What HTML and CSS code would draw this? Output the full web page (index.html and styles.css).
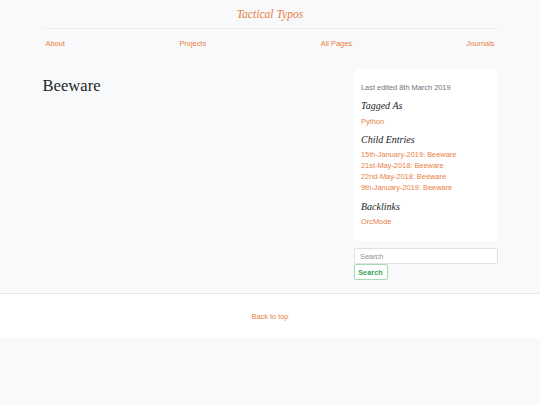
FILE: index.html
```html
<!DOCTYPE html>
<html lang="en">
<head>
<meta charset="utf-8">
<title>Beeware - Tactical Typos</title>
<link rel="stylesheet" href="styles.css">
</head>
<body>
<div class="container">
  <header class="site-header">
    <a class="site-title" href="#">Tactical Typos</a>
  </header>
  <nav class="site-nav">
    <a href="#">About</a>
    <a href="#">Projects</a>
    <a href="#">All Pages</a>
    <a href="#">Journals</a>
  </nav>
  <main class="layout">
    <article class="content">
      <h1 class="page-title">Beeware</h1>
    </article>
    <aside class="sidebar">
      <div class="card">
        <p class="edited">Last edited 8th March 2019</p>
        <h4 class="side-heading">Tagged As</h4>
        <ul class="links">
          <li><a href="#">Python</a></li>
        </ul>
        <h4 class="side-heading">Child Entries</h4>
        <ul class="links">
          <li><a href="#">15th-January-2019: Beeware</a></li>
          <li><a href="#">21st-May-2018: Beeware</a></li>
          <li><a href="#">22nd-May-2018: Beeware</a></li>
          <li><a href="#">9th-January-2019: Beeware</a></li>
        </ul>
        <h4 class="side-heading">Backlinks</h4>
        <ul class="links">
          <li><a href="#">OrcMode</a></li>
        </ul>
      </div>
      <form class="search">
        <input class="search-input" type="text" placeholder="Search">
        <button class="search-btn" type="button">Search</button>
      </form>
    </aside>
  </main>
</div>
<footer class="site-footer">
  <a href="#">Back to top</a>
</footer>
</body>
</html>
```
FILE: styles.css
```css
html, body {
  margin: 0;
  padding: 0;
  background: #f8f9fa;
}
body {
  font-family: "Liberation Sans", Arial, sans-serif;
  font-size: 7.4px;
  line-height: 11px;
  color: #212529;
}
a {
  color: #e8803f;
  text-decoration: none;
}
.container {
  width: 455px;
  margin: 0 auto;
}
.site-header {
  text-align: center;
  padding-top: 7px;
  padding-bottom: 6px;
  border-bottom: 1px solid #eceef0;
}
.site-title {
  font-family: "Liberation Serif", "Times New Roman", serif;
  font-style: italic;
  font-size: 11.6px;
  line-height: 15px;
}
.site-nav {
  display: flex;
  justify-content: space-between;
  padding: 9px 3px 0 3px;
  height: 11px;
}
.layout {
  display: grid;
  grid-template-columns: 1fr 144px;
  column-gap: 12px;
  margin-top: 20px;
}
.page-title {
  font-family: "Liberation Serif", "Times New Roman", serif;
  font-weight: normal;
  font-size: 16.6px;
  line-height: 20px;
  margin: 7px 0 0 0;
  color: #212529;
}
.card {
  background: #fff;
  border-radius: 2px;
  padding: 13px 7px 12px 7.5px;
  line-height: 11.1px;
}
.edited {
  margin: 0;
  color: #6c757d;
}
.side-heading {
  font-family: "Liberation Serif", "Times New Roman", serif;
  font-style: italic;
  font-weight: normal;
  font-size: 10px;
  line-height: 12px;
  margin: 7px 0 3.5px 0;
  color: #212529;
}
.links {
  list-style: none;
  margin: 0 0 2px 0;
  padding: 0;
}
.search {
  margin-top: 7px;
}
.search-input {
  display: block;
  box-sizing: border-box;
  width: 100%;
  height: 16px;
  margin: 0;
  padding: 0 5.5px;
  border: 1px solid #dfe2e5;
  border-radius: 2px;
  background: #fff;
  font-family: "Liberation Sans", Arial, sans-serif;
  font-size: 7.4px;
  color: #495057;
}
.search-input::placeholder {
  color: #8a9096;
}
.search-btn {
  display: block;
  box-sizing: border-box;
  height: 16px;
  width: 34px;
  margin: 0;
  padding: 0;
  border: 1px solid #a8dab5;
  border-radius: 2px;
  background: #fff;
  color: #3aa65a;
  font-family: "Liberation Sans", Arial, sans-serif;
  font-weight: bold;
  font-size: 7.4px;
}
.site-footer {
  margin-top: 13px;
  border-top: 1px solid #e7e8ea;
  background: #fff;
  height: 44px;
  display: flex;
  align-items: center;
  justify-content: center;
}
```
